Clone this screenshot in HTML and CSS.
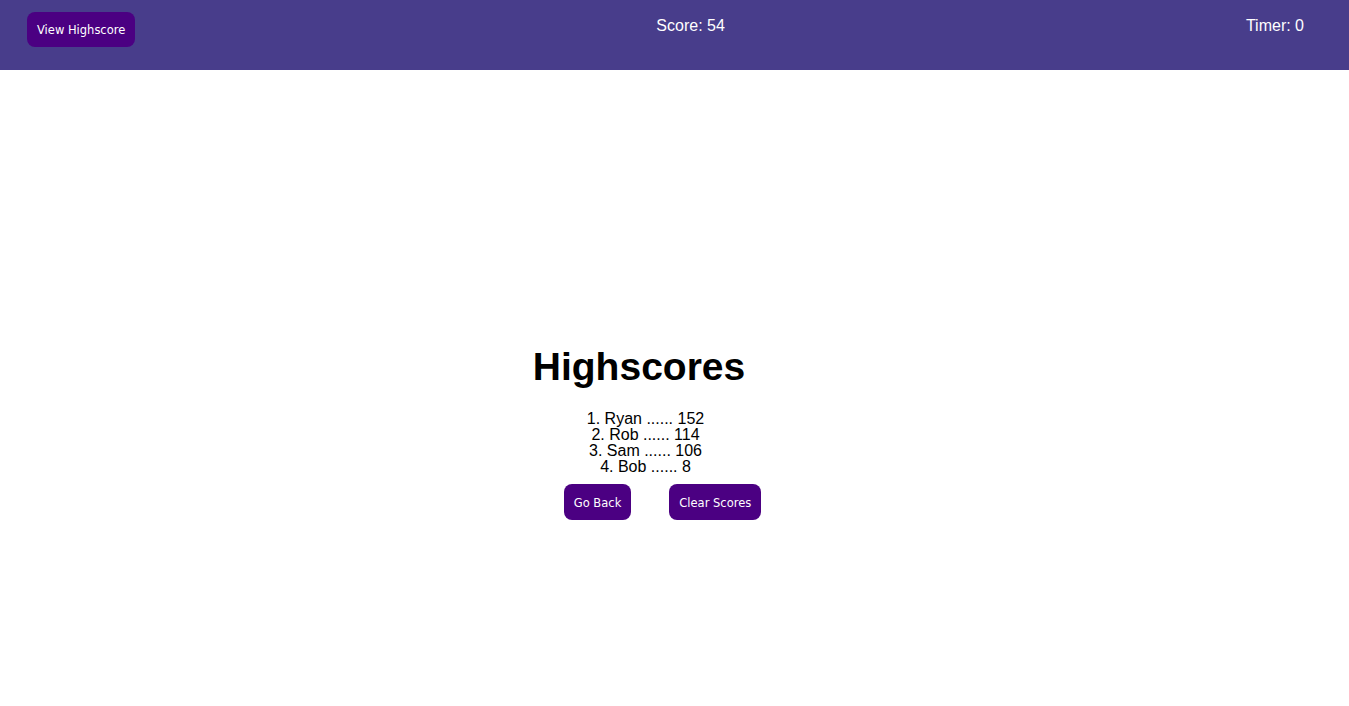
FILE: index.html
```html
<!DOCTYPE html>
<html>
<head>
<meta charset="utf-8">
<link rel="stylesheet" href="styles.css">
</head>
<body>
<header class="topbar">
  <button class="btn btn-top">View Highscore</button>
  <div class="stat">Score: 54</div>
  <div class="stat">Timer: 0</div>
</header>
<main class="board">
  <h1 class="title">Highscores</h1>
  <ol class="scores">
    <li>1. Ryan ...... 152</li>
    <li>2. Rob ...... 114</li>
    <li>3. Sam ...... 106</li>
    <li>4. Bob ...... 8</li>
  </ol>
  <div class="actions">
    <button class="btn">Go Back</button>
    <button class="btn">Clear Scores</button>
  </div>
</main>
</body>
</html>
```
FILE: styles.css
```css
html, body {
  margin: 0;
  padding: 0;
  background: #ffffff;
  font-family: "Liberation Sans", Arial, sans-serif;
}

.topbar {
  height: 70px;
  box-sizing: border-box;
  background: #483d8b;
  display: flex;
  justify-content: space-between;
  align-items: flex-start;
  padding: 12px 45px 0 27px;
}

.stat {
  color: #ffffff;
  font-size: 16px;
  line-height: 18px;
  margin-top: 5px;
}

.btn {
  font-family: "DejaVu Sans", Verdana, sans-serif;
  font-size: 11.5px;
  color: #ffffff;
  background: #4b0082;
  border: none;
  border-radius: 8px;
  padding: 1px 10px 0;
  height: 36px;
  cursor: pointer;
}

.btn-top {
  height: 35px;
}

.board {
  display: flex;
  flex-direction: column;
  align-items: center;
  padding-top: 274px;
  padding-right: 58px;
}

.title {
  font-size: 39px;
  line-height: 46px;
  font-weight: bold;
  margin: 0 13px 0 0;
  color: #000000;
}

.scores {
  list-style: none;
  margin: 21px 0 0 0;
  padding: 0;
  text-align: center;
  font-size: 16px;
  line-height: 16px;
  color: #000000;
}

.actions {
  display: flex;
  gap: 38px;
  margin-top: 9px;
  margin-left: 34px;
}
```
